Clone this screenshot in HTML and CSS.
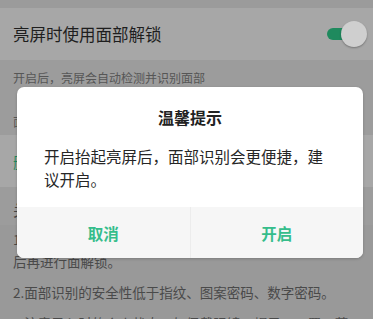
FILE: index.html
```html
<!DOCTYPE html>
<html lang="zh-CN">
<head>
    <meta charset="UTF-8">
    <meta name="viewport" content="width=device-width, initial-scale=1.0">
    <title>面部解锁</title>
    <link rel="stylesheet" href="styles.css">
</head>
<body>
<div class="page">
  <div class="status"></div>

  <div class="row">
    <span class="row-title">亮屏时使用面部解锁</span>
    <span class="switch"><span class="knob"></span></span>
  </div>
  <p class="hint">开启后，亮屏会自动检测并识别面部</p>

  <p class="section">面部数据</p>
  <div class="row row-green">
    <span class="green-text">删除面部数据</span>
  </div>

  <p class="section big">关于面部识别</p>
  <div class="notes">
    <p>1.面部识别用于解锁屏幕时，请确保面部无遮挡（如口罩）后再进行面解锁。</p>
    <p>2.面部识别的安全性低于指纹、图案密码、数字密码。</p>
    <p>3.注意录入时的个人状态，如佩戴眼镜、帽子、口罩、蓄着</p>
  </div>
</div>

<div class="dialog">
  <h3 class="dlg-title">温馨提示</h3>
  <p class="dlg-body">开启抬起亮屏后，面部识别会更便捷，建议开启。</p>
  <div class="dlg-btns">
    <button class="dlg-btn">取消</button>
    <button class="dlg-btn">开启</button>
  </div>
</div>
</body>
</html>
```

FILE: styles.css
```css
* {
  box-sizing: border-box;
}

body {
  margin: 0;
  width: 373px;
  height: 319px;
  overflow: hidden;
  background: #999999;
  font-family: "Noto Sans CJK SC", "Noto Sans", sans-serif;
  position: relative;
}

p, h3 {
  margin: 0;
}

.status {
  height: 8px;
  background: #9b9b9b;
}

.row {
  height: 52px;
  padding: 0 13px;
  display: flex;
  align-items: center;
  justify-content: space-between;
  background: #a7a7a7;
}

.row-title {
  font-size: 16.5px;
  color: #1e1e1e;
}

.switch {
  position: relative;
  width: 28px;
  height: 12px;
  margin-right: 5px;
  border-radius: 6px;
  background: #1f8a5e;
}

.knob {
  position: absolute;
  right: -12px;
  top: -7px;
  width: 26px;
  height: 26px;
  border-radius: 50%;
  background: #cfcfcf;
  box-shadow: 0 1px 2px rgba(0, 0, 0, 0.3);
}

.hint {
  padding: 9px 13px 0;
  height: 40px;
  font-size: 12px;
  line-height: 17px;
  color: #565656;
  background: #9c9c9c;
}

.section {
  padding: 13px 13px 0;
  height: 35px;
  font-size: 12px;
  line-height: 17px;
  color: #565656;
  background: #9c9c9c;
}

.section.big {
  height: 38px;
  padding-top: 14px;
  font-size: 15px;
  color: #444;
}

.green-text {
  font-size: 15px;
  color: #1f8a5e;
}

.notes {
  padding: 3px 13px 0;
  font-size: 13.5px;
  line-height: 22px;
  color: #4a4a4a;
}

.notes p {
  margin-bottom: 9px;
}

.dialog {
  position: absolute;
  left: 17px;
  top: 87px;
  width: 346px;
  height: 171px;
  border-radius: 7px;
  overflow: hidden;
  background: #ffffff;
  display: flex;
  flex-direction: column;
  box-shadow: 0 1px 3px rgba(0, 0, 0, 0.2);
}

.dlg-title {
  padding-top: 19px;
  text-align: center;
  font-size: 16px;
  line-height: 22px;
  font-weight: bold;
  color: #222;
}

.dlg-body {
  flex: 1;
  padding: 17px 27px 0;
  font-size: 15.5px;
  line-height: 23px;
  color: #262626;
}

.dlg-btns {
  height: 51px;
  display: flex;
  background: #f6f6f6;
}

.dlg-btn {
  flex: 1;
  border: none;
  background: none;
  font-family: inherit;
  font-size: 15.5px;
  font-weight: bold;
  color: #35bd8b;
  padding: 0;
}

.dlg-btn + .dlg-btn {
  border-left: 1px solid #ececec;
}
```
